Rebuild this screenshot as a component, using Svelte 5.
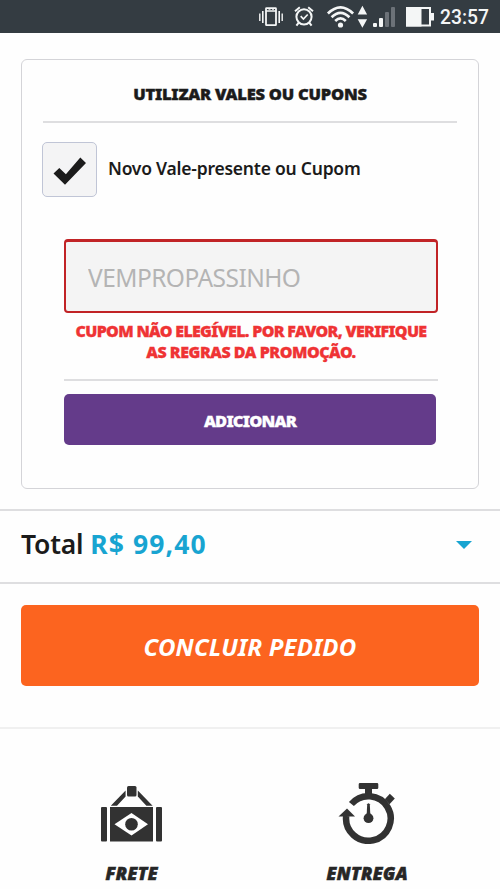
<script lang="ts">
	let useCoupon: boolean = $state(true);
	let coupon: string = $state('');
	let total: string = 'R$ 99,40';
</script>

<div class="page">
	<header class="status-bar">
		<svg width="234" height="33" viewBox="0 0 234 33" aria-hidden="true">
			<!-- vibrate -->
			<g fill="none" stroke="#f4f6f6">
				<rect x="20" y="8.2" width="10" height="17" rx="0.5" stroke-width="1.8" />
				<path d="M20 11h10M22.5 9h2M26 9h2" stroke-width="1.4" />
				<path d="M16.8 11v12M33.2 11v12" stroke-width="1.6" />
				<path d="M13.8 13.5v7.5M36.2 13.5v7.5" stroke-width="1.4" />
			</g>
			<!-- alarm -->
			<g fill="none" stroke="#f4f6f6" stroke-width="2">
				<circle cx="58" cy="16.8" r="7.6" />
				<path d="M49 11.2l4.8-3.9M67 11.2l-4.8-3.9" />
				<path d="M53 22.3l-2.6 3.4M63 22.3l2.6 3.4" />
				<path d="M54.7 16.2l2.7 2.8 4.3-4.5" stroke-width="1.7" />
			</g>
			<!-- wifi -->
			<g fill="none" stroke="#f4f6f6" stroke-width="2.7">
				<path d="M81.9 13.5Q94.5 1.3 107.1 13.5" />
				<path d="M85.6 17.2Q94.5 8.6 103.4 17.2" />
				<path d="M89.2 21Q94.5 15.9 99.8 21" />
			</g>
			<circle cx="94.5" cy="25" r="2.6" fill="#f4f6f6" />
			<path d="M111.7 14.5l4.7-8.8 4.7 8.8zM111.7 19.2l4.7 8.5 4.7-8.5z" fill="#f4f6f6" />
			<!-- signal -->
			<rect x="127" y="23" width="4" height="4" rx="1" fill="#f4f6f6" />
			<rect x="133" y="18" width="4" height="9" rx="1" fill="#f4f6f6" />
			<rect x="139" y="12" width="4" height="15" rx="1" fill="#6c7278" />
			<rect x="145" y="7" width="4" height="20" rx="1" fill="#6c7278" />
			<!-- battery -->
			<rect x="161" y="8" width="23" height="17.5" fill="none" stroke="#f4f6f6" stroke-width="2" />
			<path d="M160 7h15.5v19.5H160zM184 13h4v7.5h-4z" fill="#f4f6f6" />
		</svg>
		<span class="clock">23:57</span>
	</header>

	<section class="card">
		<h2><span>UTILIZAR VALES OU CUPONS</span></h2>

		<label class="coupon-toggle">
			<input type="checkbox" bind:checked={useCoupon} />
			<span class="box">
				{#if useCoupon}
					<svg width="53" height="53" viewBox="0 0 53 53">
						<path d="M10.5 30.5l5.8-5.6 6.6 6.4 14.4-16.8 5.7 5.6L22 41.8z" fill="#1b1b1b" />
					</svg>
				{/if}
			</span>
			<span class="toggle-text">Novo Vale-presente ou Cupom</span>
		</label>

		<div class="coupon-form">
			<input class="coupon-input" type="text" placeholder="VEMPROPASSINHO" bind:value={coupon} />
			<p class="error">
				<span class="line first">CUPOM NÃO ELEGÍVEL. POR FAVOR, VERIFIQUE</span>
				<span class="line second">AS REGRAS DA PROMOÇÃO.</span>
			</p>
			<button class="add"><span>ADICIONAR</span></button>
		</div>
	</section>

	<section class="total">
		<p><span class="total-label">Total</span> <span class="price">{total}</span></p>
		<svg width="16" height="8" viewBox="0 0 16 8"><path d="M0 0h16L8 8z" fill="#18a4d1" /></svg>
	</section>

	<div class="checkout">
		<button class="finish"><span>CONCLUIR PEDIDO</span></button>
	</div>

	<footer>
		<div class="benefit">
			<svg width="64" height="64" viewBox="0 0 64 64" fill="#323232">
				<rect x="27" y="6" width="9.5" height="10.5" rx="1.5" />
				<path d="M25.6 10.5v6L17 25.8h-6.2zM37.8 10.5v6l8.6 9.3h6.2z" />
				<rect x="1" y="27" width="6" height="34.5" rx="1" />
				<rect x="56" y="27" width="6" height="34.5" rx="1" />
				<rect x="10" y="27" width="43" height="34.5" />
				<path d="M14.5 44.2L31.5 33 48 44.2 31.5 55.4z" fill="#fff" />
				<circle cx="31.5" cy="44.2" r="6.3" />
			</svg>
			<strong>FRETE</strong>
		</div>
		<div class="benefit">
			<svg width="64" height="64" viewBox="0 0 64 64" fill="#323232">
				<path d="M25 3h17q1.3 0 1.3 1.3v3.4Q43.3 9 42 9h-5v5h-7V9h-5q-1.3 0-1.3-1.3V4.3Q23.7 3 25 3z" />
				<path d="M16.4 24A22.3 22.3 0 1 1 11.2 36" fill="none" stroke="#323232" stroke-width="6.5" />
				<path d="M3.5 36.5L12 28.5l8 8z" />
				<path d="M49.8 19.2l5-5.5 5 4.8-5.3 5.8z" />
				<path d="M32.2 24.2q1.3-2 2.6 0L35.3 34h-3.6z" />
				<circle cx="33.5" cy="38.2" r="4.9" />
			</svg>
			<strong>ENTREGA</strong>
		</div>
	</footer>
</div>

<style>
	:global(body) {
		background: #fefefe;
		overflow: hidden;
	}

	.page {
		height: 889px;
		overflow: hidden;
		color: #1b1b1b;
		font-family: 'Noto Sans', 'Open Sans', sans-serif;
	}

	* {
		box-sizing: border-box;
	}

	span {
		white-space: nowrap;
	}

	.status-bar {
		height: 33px;
		padding-right: 10px;
		display: flex;
		align-items: center;
		justify-content: flex-end;
		background: #343c42;
	}

	.status-bar svg {
		margin-right: -40px;
	}

	.clock {
		width: 50px;
		padding-top: 1px;
		color: #f4f6f6;
		font: 500 19.3px/33px Roboto, sans-serif;
	}

	.card {
		height: 430px;
		margin: 26px 21px 0;
		padding: 0 20px;
		border: 1px solid #d4d4d8;
		border-radius: 6px;
	}

	h2 {
		height: 63px;
		margin: 0 1px;
		border-bottom: 2px solid #dedee0;
		font-size: 16.5px;
		font-weight: 900;
		letter-spacing: -0.23px;
		line-height: 67px;
		text-align: center;
		-webkit-text-stroke: 0.4px;
	}

	.coupon-toggle {
		display: flex;
		align-items: center;
		height: 56px;
		margin-top: 18px;
	}

	.coupon-toggle input {
		display: none;
	}

	.box {
		width: 55px;
		height: 55px;
		border: 1.5px solid #c0c5d6;
		border-radius: 5px;
		background: #f4f4f5;
	}

	.toggle-text {
		margin: -3px 0 0 11px;
		font-size: 17.5px;
		font-weight: 600;
		letter-spacing: -0.23px;
	}

	.coupon-form {
		margin: 42px 20px 0 22px;
	}

	.coupon-input {
		display: block;
		width: 374px;
		height: 74px;
		padding: 1px 22px 0;
		border: 2px solid #c12326;
		border-top-width: 3px;
		border-radius: 4px;
		outline: none;
		background: #f4f4f4;
		font: 24.5px 'Noto Sans', sans-serif;
		letter-spacing: -0.55px;
	}

	.coupon-input::placeholder {
		color: #b4b4b4;
		opacity: 1;
	}

	.error {
		height: 68px;
		margin: 0 0 13px;
		padding-top: 8px;
		border-bottom: 2px solid #dedee0;
		color: #ef3334;
		font-size: 16px;
		font-weight: 900;
		line-height: 21px;
		text-align: center;
		-webkit-text-stroke: 0.3px;
	}

	.line {
		display: block;
	}

	.first {
		letter-spacing: -0.68px;
	}

	.second {
		letter-spacing: -0.47px;
	}

	button {
		display: flex;
		align-items: center;
		justify-content: center;
		padding: 0;
		border: 0;
		color: #fff;
		font-family: inherit;
		cursor: pointer;
	}

	.add {
		width: 372px;
		height: 51px;
		padding-top: 1px;
		border-radius: 5px;
		background: #643b8a;
		font-size: 16.5px;
		font-weight: 900;
		letter-spacing: -0.8px;
		-webkit-text-stroke: 0.3px;
	}

	.total {
		display: flex;
		align-items: center;
		justify-content: space-between;
		height: 75px;
		margin-top: 20px;
		padding: 0 28px 3px 21px;
		border-top: 2px solid #dedee0;
		border-bottom: 2px solid #dedee0;
	}

	.total p {
		margin: 0 0 2px;
		font-size: 26.5px;
		font-weight: 600;
	}

	.total-label {
		letter-spacing: -0.2px;
	}

	.price {
		color: #18a4d1;
		font-weight: 700;
		letter-spacing: 1.1px;
	}

	.checkout {
		height: 145px;
		padding: 21px 21px 0;
		border-bottom: 2px solid #f0f0f0;
	}

	.finish {
		width: 458px;
		height: 81px;
		padding-top: 1px;
		border-radius: 5px;
		background: #fc641f;
		font-size: 24px;
		font-style: italic;
		font-weight: 700;
		letter-spacing: 0.15px;
	}

	footer {
		display: grid;
		grid-template-columns: 1fr 1fr;
		padding: 51px 15px 0 14px;
	}

	.benefit {
		display: flex;
		flex-direction: column;
		align-items: center;
	}

	.benefit strong {
		margin-top: 17px;
		color: #262626;
		font-size: 17.5px;
		font-style: italic;
		font-weight: 900;
		letter-spacing: 0.4px;
		line-height: 24px;
		-webkit-text-stroke: 0.6px;
	}
</style>
